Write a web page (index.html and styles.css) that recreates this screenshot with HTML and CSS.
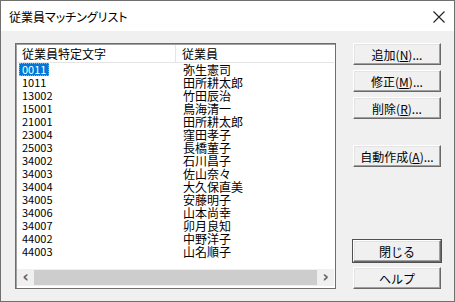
FILE: index.html
```html
<!DOCTYPE html>
<html lang="ja">
<head>
  <meta charset="UTF-8">
  <title>従業員マッチングリスト</title>
  <link rel="stylesheet" href="styles.css">
</head>
<body>

  <div class="window">
    <div class="titlebar">
      <span class="title">従業員マッチングリスト</span>
      <svg class="close" width="12" height="12" viewBox="0 0 12 12">
        <path d="M0.5 0.5 L11.5 11.5 M11.5 0.5 L0.5 11.5" stroke="#222" stroke-width="1.1" fill="none"/>
      </svg>
    </div>

    <div class="content">
      <div class="listbox">
        <div class="list-head">
          <div class="col-code">従業員特定文字</div>
          <div class="col-name">従業員</div>
        </div>
        <ul class="rows">
          <li><span class="code"><span class="selected">0011</span></span><span class="name">弥生憲司</span></li>
          <li><span class="code">1011</span><span class="name">田所耕太郎</span></li>
          <li><span class="code">13002</span><span class="name">竹田辰治</span></li>
          <li><span class="code">15001</span><span class="name">鳥海清一</span></li>
          <li><span class="code">21001</span><span class="name">田所耕太郎</span></li>
          <li><span class="code">23004</span><span class="name">窪田孝子</span></li>
          <li><span class="code">25003</span><span class="name">長橋菫子</span></li>
          <li><span class="code">34002</span><span class="name">石川昌子</span></li>
          <li><span class="code">34003</span><span class="name">佐山奈々</span></li>
          <li><span class="code">34004</span><span class="name">大久保直美</span></li>
          <li><span class="code">34005</span><span class="name">安藤明子</span></li>
          <li><span class="code">34006</span><span class="name">山本尚幸</span></li>
          <li><span class="code">34007</span><span class="name">卯月良知</span></li>
          <li><span class="code">44002</span><span class="name">中野洋子</span></li>
          <li><span class="code">44003</span><span class="name">山名順子</span></li>
        </ul>
        <div class="hscroll">
          <span class="arrow">&lsaquo;</span>
          <div class="track"><div class="thumb"></div></div>
          <span class="arrow">&rsaquo;</span>
        </div>
      </div>

      <div class="buttons">
        <button>追加(<u>N</u>)...</button>
        <button>修正(<u>M</u>)...</button>
        <button>削除(<u>R</u>)...</button>
        <button class="gap-top">自動作成(<u>A</u>)...</button>
        <button class="default push-down">閉じる</button>
        <button>ヘルプ</button>
      </div>
    </div>
  </div>

</body>
</html>
```

FILE: styles.css
```css
body {
  margin: 0;
  background: #ffffff;
  font-family: "Noto Sans CJK JP", sans-serif;
  font-size: 12px;
  color: #000;
}

.window {
  width: 455px;
  height: 302px;
  box-sizing: border-box;
  border: 1px solid #707070;
  display: flex;
  flex-direction: column;
}

.titlebar {
  height: 30px;
  background: #ffffff;
  display: flex;
  align-items: center;
  justify-content: space-between;
  padding: 0 9px 0 8px;
}

.title {
  font-size: 12px;
  font-feature-settings: "palt";
  color: #000;
}

.close {
  margin-top: 1px;
}

.content {
  flex: 1;
  background: #f0f0f0;
  display: flex;
  padding: 12px 13px 12px 14px;
  gap: 17px;
}

/* list view */
.listbox {
  width: 321px;
  box-sizing: border-box;
  border: 1px solid #6e6e6e;
  box-shadow: inset 1px 1px 0 #a0a0a0;
  background: #ffffff;
  display: flex;
  flex-direction: column;
  padding: 1px;
}

.list-head {
  display: flex;
  height: 17px;
  border-bottom: 1px solid #e5e5e5;
  line-height: 17px;
}

.col-code {
  width: 159px;
  padding-left: 5px;
  box-sizing: border-box;
  border-right: 1px solid #e5e5e5;
}

.col-name {
  padding-left: 6px;
}

.rows {
  list-style: none;
  margin: 0;
  padding: 0;
  flex: 1;
}

.rows li {
  display: flex;
  height: 13px;
  line-height: 13px;
}

.code {
  flex: none;
  width: 162px;
  padding-left: 5px;
  box-sizing: border-box;
  font-size: 11px;
}

.selected {
  display: inline-block;
  margin-left: -3px;
  padding: 0 3px;
  background: #0078d7;
  color: #fff;
  outline: 1px dotted #f0a030;
  outline-offset: -1px;
}

.name {
  padding-left: 4px;
}

/* horizontal scrollbar */
.hscroll {
  height: 17px;
  display: flex;
  align-items: center;
  background: #f0f0f0;
  margin-bottom: 1px;
}

.arrow {
  width: 17px;
  text-align: center;
  font-family: "DejaVu Sans", sans-serif;
  font-size: 15px;
  font-weight: bold;
  color: #606060;
  line-height: 17px;
}

.track {
  flex: 1;
  height: 17px;
  display: flex;
  align-items: center;
}

.thumb {
  width: 100%;
  height: 15px;
  background: #cdcdcd;
}

/* buttons */
.buttons {
  display: flex;
  flex-direction: column;
  gap: 5px;
}

.buttons button {
  width: 88px;
  height: 22px;
  padding: 0;
  font-family: "Noto Sans CJK JP", sans-serif;
  font-size: 12px;
  background: #f0f0f0;
  border: 1px solid;
  border-color: #ffffff #696969 #696969 #ffffff;
  box-shadow: inset -1px -1px 0 #a0a0a0, inset 1px 1px 0 #e3e3e3;
  color: #000;
}

.buttons button u {
  text-underline-offset: 1px;
}

.buttons .gap-top {
  margin-top: 21px;
}

.buttons .push-down {
  margin-top: auto;
}

.buttons .default {
  outline: 1px solid #505050;
}
```
